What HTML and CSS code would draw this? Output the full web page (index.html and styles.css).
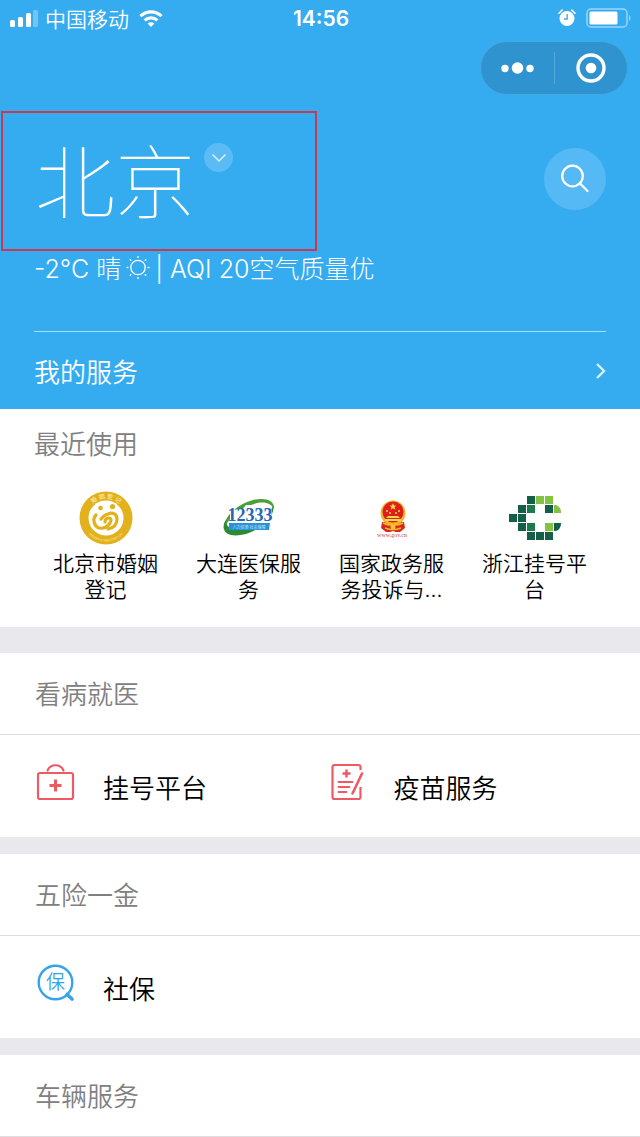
FILE: index.html
```html
<!DOCTYPE html>
<html lang="zh-CN">
<head>
    <meta charset="UTF-8">
    <meta name="viewport" content="width=device-width, initial-scale=1.0">
    <title>城市服务</title>
    <link rel="stylesheet" href="styles.css">
</head>
<body>
    <header class="hero">
        <div class="status-bar">
            <div class="status-left">
                <svg width="29" height="18" viewBox="0 0 29 18" fill="#fff">
                    <rect x="0" y="11" width="5" height="7" rx="1.5"/>
                    <rect x="8" y="8" width="5" height="10" rx="1.5"/>
                    <rect x="16" y="4" width="5" height="14" rx="1.5"/>
                    <rect x="23" y="1" width="5" height="17" rx="1.5" opacity="0.3"/>
                </svg>
                <span class="carrier">中国移动</span>
                <svg class="wifi" width="24" height="17" viewBox="0 0 24 17">
                    <path d="M1.4 6.2C7.4.4 16.6.4 22.6 6.2" fill="none" stroke="#fff" stroke-width="3.2"/>
                    <path d="M5.6 10.4c3.7-3.5 9.1-3.5 12.8 0" fill="none" stroke="#fff" stroke-width="3.2"/>
                    <path d="M12 17l-3.4-3.6c1.9-1.7 4.9-1.7 6.8 0z" fill="#fff"/>
                </svg>
            </div>
            <time class="clock">14:56</time>
            <div class="status-right">
                <svg width="18" height="18" viewBox="0 0 18 18">
                    <circle cx="9" cy="9.5" r="7.5" fill="#fff"/>
                    <path d="M1 4.2L4.2 1M17 4.2L13.8 1" stroke="#fff" stroke-width="1.6" stroke-linecap="round"/>
                    <path d="M9.2 5v5H6" fill="none" stroke="#35abf0" stroke-width="1.3"/>
                </svg>
                <svg width="46" height="20" viewBox="0 0 46 20">
                    <rect x="1" y="1" width="40" height="18" rx="4" fill="none" stroke="#fff" stroke-opacity="0.5" stroke-width="1.5"/>
                    <rect x="3.5" y="3.5" width="28" height="13" rx="1.5" fill="#fff"/>
                    <path d="M43 7c2 1 2 5 0 6z" fill="#fff" opacity="0.5"/>
                </svg>
            </div>
        </div>

        <div class="capsule">
            <button type="button" aria-label="更多">
                <svg width="34" height="14" viewBox="0 0 34 14" fill="#fff">
                    <circle cx="5" cy="7.5" r="3.7"/>
                    <circle cx="17.5" cy="7" r="5.8"/>
                    <circle cx="30" cy="7.5" r="3.7"/>
                </svg>
            </button>
            <button type="button" aria-label="关闭">
                <svg width="30" height="30" viewBox="0 0 30 30">
                    <circle cx="15" cy="15" r="13" fill="none" stroke="#fff" stroke-width="3.4"/>
                    <circle cx="15" cy="15" r="5.3" fill="#fff"/>
                </svg>
            </button>
        </div>

        <div class="location">
            <div class="city">
                <h1>北京</h1>
                <button type="button" class="city-switch" aria-label="切换城市">
                    <svg width="14" height="8" viewBox="0 0 14 8" fill="none" stroke="#d8f3ff" stroke-width="1.5">
                        <path d="M0.5 0.5L7 7l6.5-6.5"/>
                    </svg>
                </button>
            </div>
            <button type="button" class="search" aria-label="搜索">
                <svg width="30" height="30" viewBox="0 0 30 30" fill="none" stroke="#fff" stroke-width="2.3" stroke-linecap="round">
                    <circle cx="12.5" cy="12" r="10.3"/>
                    <path d="M20 19.500L27.500 27"/>
                </svg>
            </button>
        </div>

        <p class="weather">
            <span>-2°C 晴</span>
            <svg width="24" height="24" viewBox="0 0 24 24" fill="none" stroke="#fff" stroke-linecap="round">
                <circle cx="12" cy="10.500" r="7.200" stroke-width="1.300"/>
                <path d="M12-.3v.6M12 20.700v.6M1.200 10.500h.6M22.200 10.500h.6M4.300 2.800l.4.4M19.300 17.800l.4.4M4.300 18.200l.4-.4M19.300 3.200l.4-.4" stroke-width="1.600"/>
            </svg>
            <span>| AQI 20空气质量优</span>
        </p>

        <a class="my-service" href="#">
            <span>我的服务</span>
            <svg width="12" height="16" viewBox="0 0 12 16" fill="none" stroke="#d8f3ff" stroke-width="2.4">
                <path d="M3 1l7 7-7 7"/>
            </svg>
        </a>
    </header>

    <main>
        <section class="recent">
            <h2>最近使用</h2>
            <ul>
                <li>
                    <a href="#">
                        <svg width="56" height="56" viewBox="0 0 56 56">
                            <defs>
                                <path id="ring-top" d="M8.5 28a19.5 19.5 0 0 1 39 0"/>
                                <path id="ring-bottom" d="M4.5 28a23.5 23.5 0 0 0 47 0"/>
                            </defs>
                            <circle cx="28" cy="28" r="26.5" fill="#e2b11c"/>
                            <circle cx="28" cy="28" r="17.5" fill="#fff"/>
                            <text font-size="6" fill="#fff6d0"><textPath href="#ring-top" startOffset="50%" text-anchor="middle">婚 姻 登 记</textPath></text>
                            <text font-size="3" fill="#fff6d0"><textPath href="#ring-bottom" startOffset="50%" text-anchor="middle">MARRIAGE REGISTRATION</textPath></text>
                            <circle cx="22.5" cy="18" r="2.3" fill="#e2b11c"/>
                            <circle cx="34.5" cy="16.5" r="2.6" fill="#e2b11c"/>
                            <path d="M18 25c-4 4-2 11 3 13 5 1 9-2 11-5 2-3 1-5-1-5-3 0-4 2-4 4" fill="none" stroke="#e2b11c" stroke-width="3.2" stroke-linecap="round"/>
                            <path d="M23 29c3-3 3-4 7-5 5-2 9 0 9 5 0 6-4 9-9 10" fill="none" stroke="#e2b11c" stroke-width="3.2" stroke-linecap="round"/>
                        </svg>
                        <span>北京市婚姻登记</span>
                    </a>
                </li>
                <li>
                    <a href="#">
                        <svg width="56" height="56" viewBox="0 0 56 56">
                            <path d="M3 40C1 29 15 14 32 10c12-3 22 0 21 9-3-6-10-8-20-5C19 18 6 29 3 40z" fill="#4ba03a"/>
                            <path d="M52 15c3 10-10 24-27 29-12 3-21 1-22-5-1-3 0-6 2-9 0 8 6 11 18 8 15-4 27-13 29-23z" fill="#2c8a36"/>
                            <path d="M9 20l13-1 3-4h9l3 4 14 1-2 18H9z" fill="#fff"/>
                            <text class="hotline" x="29" y="31" text-anchor="middle">12333</text>
                            <path d="M8 33h41l-1 7H8z" fill="#2a92d8"/>
                            <text x="28" y="39" font-size="4" fill="#cdeeff" text-anchor="middle">人力资源 社会保障</text>
                        </svg>
                        <span>大连医保服务</span>
                    </a>
                </li>
                <li>
                    <a href="#">
                        <svg width="56" height="56" viewBox="0 0 56 56">
                            <g transform="translate(-1 0)">
                                <path d="M19 32l-1 6 5 4h4l3-1 3 1h4l5-4-1-6z" fill="#d9271c"/>
                                <circle cx="30" cy="23" r="12.5" fill="#f0b62b"/>
                                <circle cx="30" cy="22" r="10.5" fill="#dc1f1a"/>
                                <path d="M30 13l1 2.5h2.6l-2 1.6.7 2.6-2.3-1.5-2.3 1.5.7-2.6-2-1.6H29z" fill="#ffd84a"/>
                                <g fill="#ffd84a">
                                    <circle cx="24" cy="21" r="1"/>
                                    <circle cx="27" cy="23" r="1"/>
                                    <circle cx="33" cy="23" r="1"/>
                                    <circle cx="36" cy="21" r="1"/>
                                    <path d="M25 26h10l2 2H23zM22 29h16v2H22z"/>
                                </g>
                                <path d="M20 33c5 3 15 3 20 0M22 38c5 2 11 2 16 0" fill="none" stroke="#f5b82e" stroke-width="1.5"/>
                                <circle cx="30" cy="37" r="2.5" fill="#f5c03a"/>
                            </g>
                            <text class="site" x="28" y="47" text-anchor="middle">www.gov.cn</text>
                        </svg>
                        <span>国家政务服务投诉与...</span>
                    </a>
                </li>
                <li>
                    <a href="#">
                        <svg width="56" height="56" viewBox="0 0 56 56">
                            <g fill="#155f48">
                                <rect x="20" y="6" width="8" height="8"/>
                                <rect x="11" y="15" width="8" height="8"/>
                                <rect x="38" y="15" width="8" height="8"/>
                                <rect x="2" y="24" width="8" height="8"/>
                                <rect x="11" y="24" width="8" height="8"/>
                                <rect x="11" y="33" width="8" height="8"/>
                                <rect x="20" y="42" width="8" height="8"/>
                                <rect x="29" y="42" width="8" height="8"/>
                                <rect x="38" y="42" width="8" height="8"/>
                                <path d="M47 33h7c0 4-2 8-6 8h-1z"/>
                            </g>
                            <g fill="#1c7a4c">
                                <rect x="20" y="15" width="8" height="8"/>
                                <rect x="20" y="33" width="8" height="8"/>
                            </g>
                            <g fill="#83c341">
                                <rect x="29" y="6" width="8" height="8"/>
                                <rect x="38" y="6" width="8" height="8"/>
                                <rect x="38" y="33" width="8" height="8"/>
                                <path d="M47 15h1c3 0 6 3 6 7v1h-7z"/>
                            </g>
                        </svg>
                        <span>浙江挂号平台</span>
                    </a>
                </li>
            </ul>
        </section>

        <section class="group">
            <h2>看病就医</h2>
            <ul>
                <li>
                    <a href="#">
                        <svg width="40" height="40" viewBox="0 0 40 40" fill="none" stroke="#ee5a64" stroke-width="2.2">
                            <rect x="3" y="11" width="35" height="26" rx="2"/>
                            <path d="M12.5 8.5c3-7 13-7 16 0" stroke-linecap="round"/>
                            <path d="M20.5 17.5v12M14.5 23.5h12" stroke-width="3"/>
                        </svg>
                        <span>挂号平台</span>
                    </a>
                </li>
                <li>
                    <a href="#">
                        <svg width="40" height="40" viewBox="0 0 40 40" fill="none" stroke="#ee5a64" stroke-width="2.2">
                            <path d="M34.5 8V5a2 2 0 0 0-2-2h-24a2 2 0 0 0-2 2v30a2 2 0 0 0 2 2h24a2 2 0 0 0 2-2V25"/>
                            <path d="M20.5 7.5v8M16.5 11.5h8" stroke-width="2.4"/>
                            <path d="M12.5 20h14M12.5 25h11M12.5 30h8" stroke-width="1.8" stroke-linecap="round"/>
                            <path d="M36 11.5L26.500 31.500" stroke-width="2.600" stroke-linecap="round"/>
                        </svg>
                        <span>疫苗服务</span>
                    </a>
                </li>
            </ul>
        </section>

        <section class="group">
            <h2>五险一金</h2>
            <ul>
                <li>
                    <a href="#">
                        <svg width="40" height="40" viewBox="0 0 40 40">
                            <circle cx="20.5" cy="19.5" r="16.8" fill="none" stroke="#35a4e8" stroke-width="2.4"/>
                            <path d="M32 31.5l5 4.500" stroke="#35a4e8" stroke-width="3.600" stroke-linecap="round"/>
                            <text class="bao" x="20.5" y="26" text-anchor="middle">保</text>
                        </svg>
                        <span>社保</span>
                    </a>
                </li>
            </ul>
        </section>

        <section class="group">
            <h2>车辆服务</h2>
        </section>
    </main>
</body>
</html>
```
FILE: styles.css
```css
body {
    margin: 0;
    font-family: Inter, "Noto Sans CJK SC", sans-serif;
    font-weight: 350;
    color: #000;
    background: #fff;
}
h1, h2, p, ul {
    margin: 0;
    padding: 0;
    font-weight: 350;
}
ul {
    list-style: none;
}
a {
    color: inherit;
    text-decoration: none;
}
button {
    border: 0;
    padding: 0;
    background: none;
    cursor: pointer;
}
svg {
    display: block;
    flex: none;
    overflow: visible;
}

/* hero */
.hero {
    background: #35abf0;
    color: #fff;
}
.status-bar {
    display: grid;
    grid-template-columns: 1fr auto 1fr;
    align-items: center;
    height: 36px;
    padding: 0 8px 0 10px;
    font-size: 21px;
}
.status-left, .status-right {
    display: flex;
    align-items: center;
}
.carrier {
    margin: 0 10px 0 6px;
}
.clock {
    font-weight: 600;
}
.status-right {
    justify-content: flex-end;
    gap: 10px;
}
.capsule {
    display: flex;
    align-items: center;
    width: 146px;
    height: 52px;
    margin: 5px 12px 0 auto;
    border: 1px solid #45a9e4;
    border-radius: 27px;
    background: #2f93cf;
}
.capsule button {
    display: flex;
    flex: 1;
    justify-content: center;
}
.capsule button + button {
    align-items: center;
    height: 32px;
    border-left: 1px solid #58a9dc;
}
.location {
    display: flex;
    justify-content: space-between;
    align-items: center;
    margin-top: 16px;
    padding: 0 34px 0 1px;
}
.city {
    display: flex;
    box-sizing: border-box;
    width: 316px;
    height: 140px;
    padding: 30px 0 0 32px;
    border: 2px solid #c93a50;
}
.city h1 {
    font-size: 80px;
    font-weight: 100;
    line-height: 80px;
}
.city-switch {
    display: flex;
    justify-content: center;
    align-items: center;
    width: 29px;
    height: 29px;
    margin-left: 9px;
    border-radius: 50%;
    background: #5bbcf5;
}
.search {
    display: flex;
    justify-content: center;
    align-items: center;
    width: 62px;
    height: 62px;
    margin-bottom: 4px;
    border-radius: 50%;
    background: #54b9f4;
}
.weather {
    display: flex;
    align-items: center;
    gap: 5px;
    padding: 0 34px;
    font-size: 25px;
    font-weight: 300;
    line-height: 36px;
}
.my-service {
    display: flex;
    justify-content: space-between;
    align-items: center;
    height: 77px;
    margin: 44px 34px 0;
    border-top: 1px solid #a5e2fd;
    font-size: 26px;
}

/* recent services */
h2 {
    font-size: 26px;
    color: #808080;
}
.recent {
    padding: 17px 34px 24px;
    border-bottom: 26px solid #e9e9ed;
}
.recent h2 {
    line-height: 38px;
}
.recent ul {
    display: grid;
    grid-template-columns: repeat(4, 1fr);
    margin-top: 26px;
}
.recent a {
    display: flex;
    flex-direction: column;
    align-items: center;
    gap: 5px;
    padding: 0 18px;
    font-size: 21px;
    line-height: 26px;
    text-align: center;
}
.hotline {
    font-family: "Liberation Serif", serif;
    font-size: 18px;
    font-weight: 700;
    fill: #2467b5;
}
.site {
    font-family: "Liberation Serif", serif;
    font-size: 6px;
    fill: #c44;
}

/* service groups */
.group {
    border-bottom: 17px solid #e9e9ed;
}
.group:last-child {
    border-bottom: 0;
}
.group h2 {
    padding: 2px 35px 0;
    border-bottom: 1px solid #dedee0;
    line-height: 79px;
}
.group ul {
    display: grid;
    grid-template-columns: repeat(2, 1fr);
    padding: 0 24px 0 35px;
}
.group a {
    display: flex;
    align-items: center;
    gap: 28px;
    height: 102px;
    font-size: 26px;
}
.group a svg {
    margin-bottom: 8px;
}
.bao {
    font-size: 19px;
    fill: #35a4e8;
}
```
